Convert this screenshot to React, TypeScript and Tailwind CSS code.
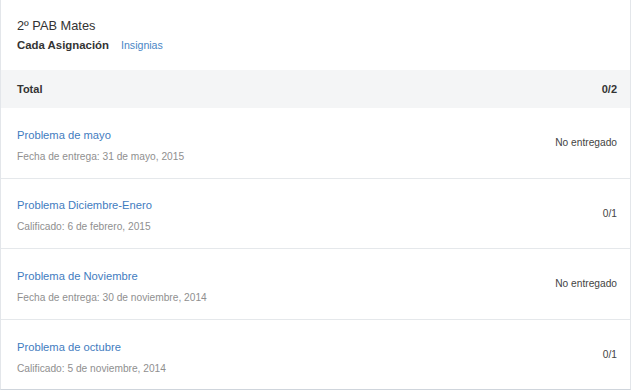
const rows = [
  { title: "Problema de mayo", sub: "Fecha de entrega: 31 de mayo, 2015", right: "No entregado" },
  { title: "Problema Diciembre-Enero", sub: "Calificado: 6 de febrero, 2015", right: "0/1" },
  { title: "Problema de Noviembre", sub: "Fecha de entrega: 30 de noviembre, 2014", right: "No entregado" },
  { title: "Problema de octubre", sub: "Calificado: 5 de noviembre, 2014", right: "0/1" },
];

export default function App() {
  return (
    <div className="w-[632px] h-[391px] bg-white font-['Liberation_Sans',Arial,sans-serif]">
      <div className="h-[390px] w-[631px] border border-[#e3e6ea] border-t-0 border-b-[#cfd5dc] bg-white">
        <div className="h-[70px] pl-[16px] pr-[14px] pt-[17px]">
          <div className="text-[12.8px] leading-[18px] text-[#333]">2º PAB Mates</div>
          <div className="mt-[2px] flex items-baseline gap-[12px]">
            <span className="text-[11.4px] font-bold text-[#333]">Cada Asignación</span>
            <span className="text-[10.6px] text-[#4a86c5]">Insignias</span>
          </div>
        </div>
        <div className="flex h-[38px] items-center justify-between bg-[#f4f5f6] pl-[16px] pr-[13px] text-[11px] font-bold text-[#333]">
          <span>Total</span>
          <span>0/2</span>
        </div>
        {rows.map((r, i) => (
          <div
            key={r.title}
            className={
              "flex h-[70.5px] items-center justify-between pl-[16px] pr-[13px] " +
              (i < rows.length - 1 ? "border-b border-[#e5e8eb]" : "")
            }
          >
            <div className="flex flex-col gap-[8px] pt-[5px]">
              <span className="text-[11.2px] leading-[14px] text-[#3f7cc0]">{r.title}</span>
              <span className="text-[10.2px] leading-[13px] text-[#8f8f8f]">{r.sub}</span>
            </div>
            <span className="text-[10.2px] text-[#444]">{r.right}</span>
          </div>
        ))}
      </div>
    </div>
  );
}
